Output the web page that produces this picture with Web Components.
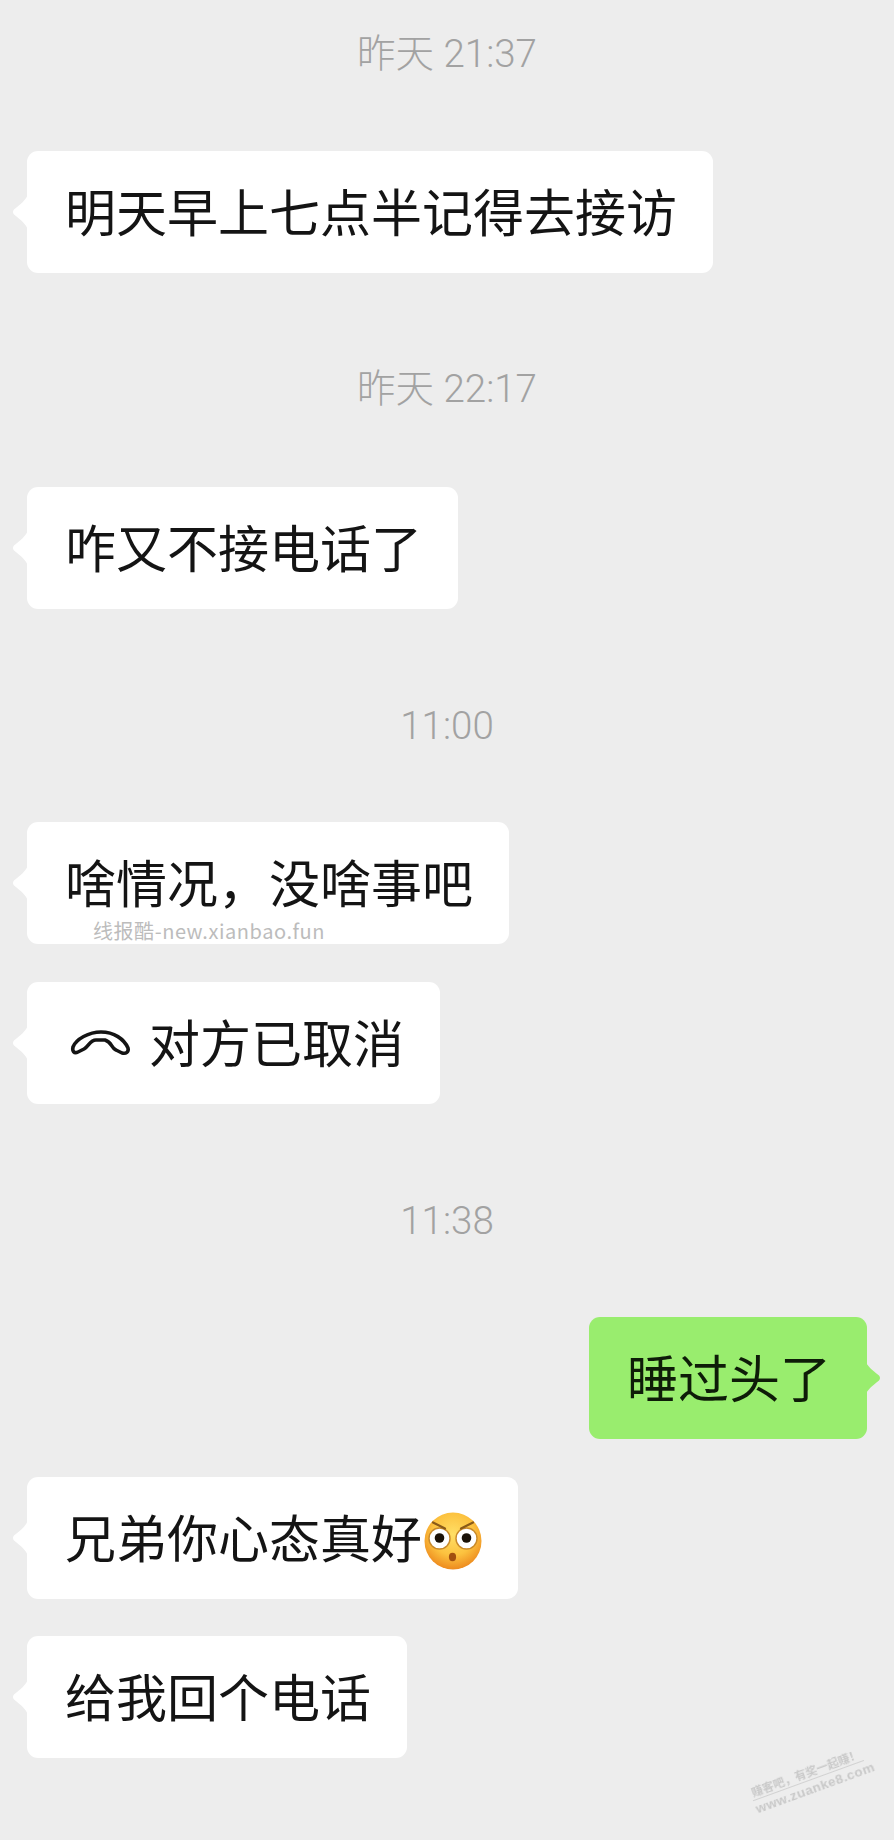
<!DOCTYPE html>
<html lang="zh-CN">
<head>
<meta charset="utf-8">
<title>Chat</title>
<style>
  html, body { margin: 0; padding: 0; background: #ededed; }
  body { width: 894px; height: 1840px; overflow: hidden; }
</style>
</head>
<body>
<chat-page>
  <chat-time style="margin-bottom:73px">昨天 21:37</chat-time>
  <chat-bubble>明天早上七点半记得去接访</chat-bubble>
  <chat-time style="margin:90px 0 74px">昨天 22:17</chat-time>
  <chat-bubble>咋又不接电话了</chat-bubble>
  <chat-time style="margin:91px 0 72px">11:00</chat-time>
  <chat-bubble>啥情况，没啥事吧</chat-bubble>
  <chat-bubble style="margin-top:38px"><hangup-icon></hangup-icon>对方已取消</chat-bubble>
  <chat-time style="margin:91px 0 72px">11:38</chat-time>
  <chat-bubble side="right">睡过头了</chat-bubble>
  <chat-bubble style="margin-top:38px">兄弟你心态真好<flushed-emoji></flushed-emoji></chat-bubble>
  <chat-bubble style="margin-top:37px">给我回个电话</chat-bubble>
  <text-mark slot="overlay"></text-mark>
  <corner-mark slot="overlay"></corner-mark>
</chat-page>
<script>
const CJK = '"Noto Sans CJK SC", "Noto Sans", sans-serif';
function def(name, html) {
  customElements.define(name, class extends HTMLElement {
    constructor() {
      super();
      this.attachShadow({ mode: 'open' }).innerHTML = html;
    }
  });
}
def('chat-page', `<style>
  :host { display: flex; flex-direction: column; align-items: flex-start; position: relative;
    box-sizing: border-box; width: 894px; height: 1840px; padding: 28px 27px 0; background: #ededed;
    font-family: ${CJK}; overflow: hidden; }
</style><slot></slot><slot name="overlay"></slot>`);
def('chat-time', `<style>
  :host { display: block; align-self: stretch; box-sizing: border-box; height: 50px; padding-top: 2px; text-align: center;
    font: 300 38.5px/48px Roboto, ${CJK}; color: #a2a2a2; }
</style><slot></slot>`);
def('chat-bubble', `<style>
  :host { display: inline-flex; align-items: center; position: relative; box-sizing: border-box;
    height: 122px; padding: 0 36px 5px 38px; border-radius: 11px; background: #fff; color: #141414;
    font: 400 51px/112px ${CJK}; white-space: nowrap; }
  :host([side="right"]) { align-self: flex-end; background: #99ed6e; color: #0e1c08; }
  svg { position: absolute; left: -15px; top: 43px; width: 16px; height: 36px; fill: #fff; }
  :host([side="right"]) svg { left: auto; right: -14px; transform: scaleX(-1); fill: #99ed6e; }
</style><svg viewBox="0 0 16 36"><path d="M16 0C14 6 9 10 2 15.5Q0 18 2 20.5C9 26 14 30 16 36Z"/></svg><slot></slot>`);
def('hangup-icon', `<style>
  :host { display: block; flex: none; width: 58px; height: 24px; margin: 5px 19px 0 7px; }
  svg { display: block; width: 100%; height: 100%; overflow: visible; }
</style><svg viewBox="0 0 58 24"><path fill="none" stroke="#141414" stroke-width="3.6" stroke-linejoin="round"
 d="M1 16C4 8 17 1 29 1C42 1 52 8 56 17C57 21 54 23 50 22L44 19C39 17 40 11 33 9L24 9C18 9 17 15 12 18L6 21C2 23 0 20 1 16Z"/></svg>`);
def('flushed-emoji', `<style>
  :host { display: block; flex: none; width: 58px; height: 58px; margin: 11px 0 0 2px; }
  svg { display: block; width: 100%; height: 100%; }
</style><svg viewBox="0 0 58 58">
  <defs>
    <radialGradient id="f" cx="50%" cy="38%" r="62%">
      <stop offset="0" stop-color="#ffdf66"/><stop offset=".6" stop-color="#fcc23f"/><stop offset="1" stop-color="#ed8a1e"/>
    </radialGradient>
  </defs>
  <circle cx="29" cy="29" r="28.5" fill="url(#f)"/>
  <circle cx="15.5" cy="26.5" r="10.5" fill="#fff" stroke="#c98a2b" stroke-width="1.4"/>
  <circle cx="42.5" cy="26.5" r="10.5" fill="#fff" stroke="#c98a2b" stroke-width="1.4"/>
  <circle cx="15.5" cy="26" r="4.8" fill="#1b1208"/>
  <circle cx="42.5" cy="26" r="4.8" fill="#1b1208"/>
  <path d="M9 10.5L21 16.5M49 10.5L37 16.5" stroke="#8a5a18" stroke-width="2.2" stroke-linecap="round" fill="none"/>
  <ellipse cx="28.5" cy="45" rx="3.6" ry="4.2" fill="#a14f10"/>
</svg>`);
def('text-mark', `<style>
  :host { display: block; position: absolute; left: 93px; top: 917px; font: 400 20px/28px ${CJK}; color: #bcbcbc;
    letter-spacing: .55px; white-space: nowrap; }
</style>线报酷-new.xianbao.fun`);
def('corner-mark', `<style>
  :host { display: block; position: absolute; left: 750px; top: 1765px; width: 118px; text-align: center;
    transform: rotate(-20deg); color: #c9c9c9; filter: blur(.6px); white-space: nowrap; }
  .a { font: 700 11.5px/15px ${CJK}; border-bottom: 1.5px solid #d2d2d2; }
  .b { font: 700 13.5px/18px "Liberation Sans", sans-serif; letter-spacing: .4px; }
</style><div class="a">赚客吧，有奖一起赚！</div><div class="b">www.zuanke8.com</div>`);
</script>
</body>
</html>
